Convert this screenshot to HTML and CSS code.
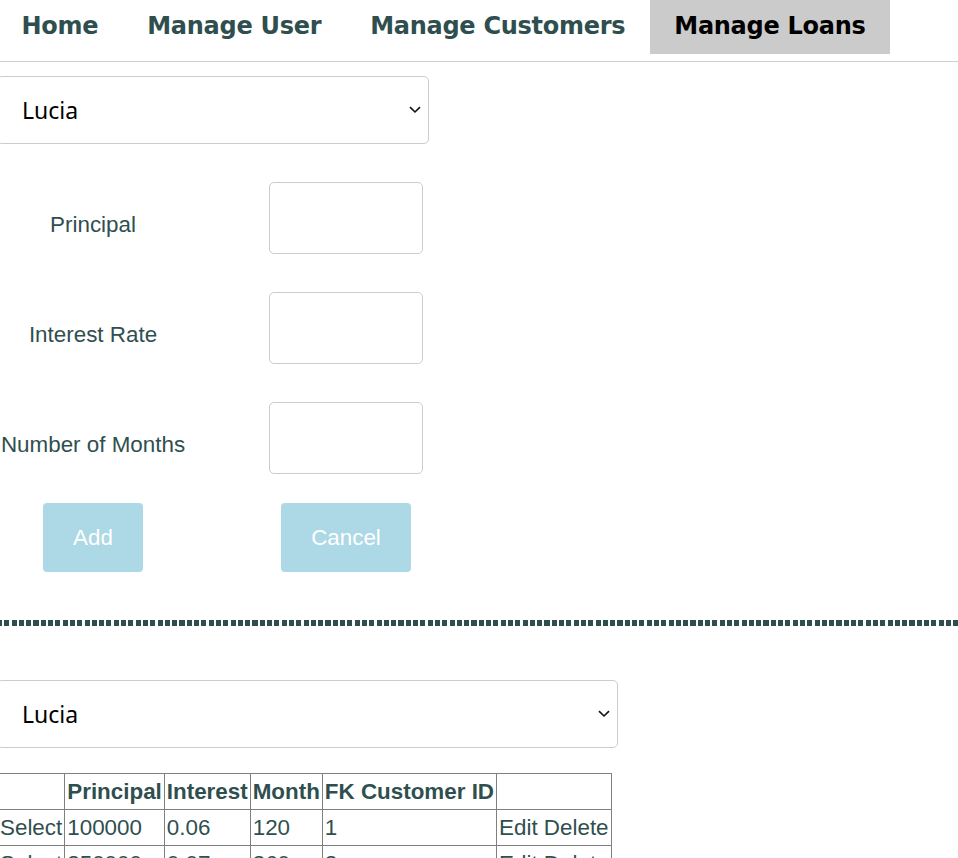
FILE: index.html
```html
<!DOCTYPE html>
<html lang="en">
<head>
<meta charset="utf-8">
<title>Manage Loans</title>
<link rel="stylesheet" href="styles.css">
</head>
<body>
<div class="page">
  <nav class="nav">
    <ul class="nav-list">
      <li class="nav-item">Home</li>
      <li class="nav-item">Manage User</li>
      <li class="nav-item">Manage Customers</li>
      <li class="nav-item active">Manage Loans</li>
    </ul>
  </nav>

  <div class="select-wrap select-top">
    <select class="select"><option>Lucia</option></select>
    <svg class="chevron" width="12" height="8" viewBox="0 0 12 8"><path d="M1 1.2 L6 6 L11 1.2" fill="none" stroke="#111" stroke-width="1.6"/></svg>
  </div>

  <form class="loan-form">
    <div class="fields">
      <label class="field-label">Principal</label>
      <input class="field-input" type="text">
      <label class="field-label">Interest Rate</label>
      <input class="field-input" type="text">
      <label class="field-label">Number of Months</label>
      <input class="field-input" type="text">
    </div>
    <div class="actions">
      <button type="button" class="btn">Add</button>
      <button type="button" class="btn">Cancel</button>
    </div>
  </form>

  <div class="divider"></div>

  <div class="select-wrap select-bottom">
    <select class="select"><option>Lucia</option></select>
    <svg class="chevron" width="12" height="8" viewBox="0 0 12 8"><path d="M1 1.2 L6 6 L11 1.2" fill="none" stroke="#111" stroke-width="1.6"/></svg>
  </div>

  <table class="loans">
    <thead>
      <tr><th></th><th>Principal</th><th>Interest</th><th>Month</th><th>FK Customer ID</th><th></th></tr>
    </thead>
    <tbody>
      <tr><td>Select</td><td>100000</td><td>0.06</td><td>120</td><td>1</td><td>Edit Delete</td></tr>
      <tr><td>Select</td><td>250000</td><td>0.07</td><td>360</td><td>2</td><td>Edit Delete</td></tr>
    </tbody>
  </table>
</div>
</body>
</html>
```
FILE: styles.css
```css
body {
  margin: 0;
  background: #fff;
  color: #2f4f4f;
  font-family: "Liberation Sans", Arial, sans-serif;
}

.page {
  margin-left: -3px;
}

.nav {
  height: 61px;
  border-bottom: 1px solid #cfcfcf;
}

.nav-list {
  display: flex;
  margin: 0;
  padding: 0;
  list-style: none;
}

.nav-item {
  padding: 12px 24.5px 14px;
  font: bold 24px/28px "DejaVu Sans", Verdana, sans-serif;
  letter-spacing: -0.28px;
  color: #2f4f4f;
}

.nav-item.active {
  background: #cbcbcb;
  color: #000;
}

.select-wrap {
  position: relative;
}

.select-top {
  width: 432px;
  margin-top: 14px;
}

.select-bottom {
  width: 621px;
  margin-top: 54px;
}

.select {
  display: block;
  box-sizing: border-box;
  width: 100%;
  height: 68px;
  margin: 0;
  padding: 0 24px;
  appearance: none;
  -webkit-appearance: none;
  border: 1px solid #cccccc;
  border-radius: 5px;
  background: #fff;
  color: #000;
  font: 23px "Noto Sans", "Open Sans", sans-serif;
}

.chevron {
  position: absolute;
  right: 8px;
  top: 30px;
}

.fields,
.actions {
  display: grid;
  grid-template-columns: 192px 314px;
  justify-items: center;
  align-items: center;
}

.fields {
  row-gap: 38px;
  margin-top: 38px;
}

.actions {
  margin-top: 29px;
}

.field-label {
  padding-top: 14px;
  font-size: 22.4px;
  line-height: 26px;
  color: #2f4f4f;
  white-space: nowrap;
}

.field-input {
  box-sizing: border-box;
  width: 154px;
  height: 72px;
  margin: 0;
  border: 1px solid #cccccc;
  border-radius: 5px;
  background: #fff;
}

.btn {
  height: 69px;
  padding: 0 30px;
  border: none;
  border-radius: 4px;
  background: #add8e6;
  color: #fff;
  font: 22.4px "Liberation Sans", Arial, sans-serif;
}

.divider {
  height: 6px;
  margin-top: 48px;
  background: repeating-linear-gradient(to right, #2f4f4f 0 5px, transparent 5px 7.3px);
}

.loans {
  margin-top: 25px;
  border-collapse: collapse;
  font-size: 22.4px;
  color: #2f4f4f;
}

.loans th,
.loans td {
  border: 1px solid #808080;
  padding: 5px 2px;
  line-height: 25px;
  text-align: left;
  white-space: nowrap;
}

.loans th {
  font-weight: bold;
}
```
